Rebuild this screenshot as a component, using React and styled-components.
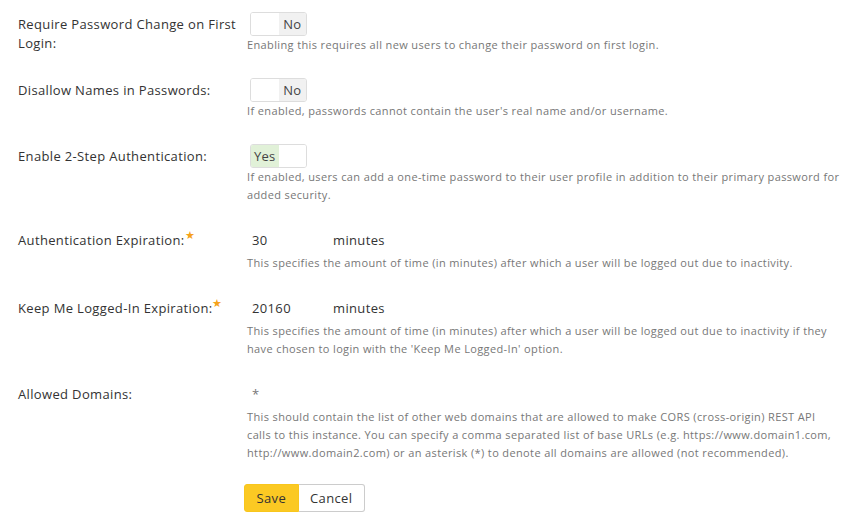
import React, { useState } from 'react';
import styled, { createGlobalStyle } from 'styled-components';

const GlobalStyle = createGlobalStyle`
  body {
    margin: 0;
    background: #fff;
    font-family: 'Open Sans', 'Liberation Sans', sans-serif;
    color: #333;
  }
`;

const Form = styled.div`
  display: flex;
  flex-direction: column;
  gap: 24px;
  padding: 12px 24px 0 18px;
`;

const Row = styled.div`
  display: grid;
  grid-template-columns: 229px 1fr;
  align-items: start;
`;

const Label = styled.label`
  font-size: 13px;
  line-height: 19px;
  letter-spacing: 0.35px;
  color: #333;
  padding-top: 3px;
  padding-right: 8px;
`;

const Star = styled.span`
  position: relative;
  top: -6px;
  color: #f5a21b;
  font-size: 11px;
  line-height: 0;
  letter-spacing: 0;
`;

const Field = styled.div`
  display: flex;
  flex-direction: column;
`;

const Help = styled.div`
  font-size: 11px;
  line-height: 18px;
  letter-spacing: 0.37px;
  color: #777;
`;

const Toggle = styled.button`
  display: flex;
  width: 57px;
  height: 24px;
  margin-left: 3px;
  padding: 0;
  border: 1px solid #ddd;
  border-radius: 3px;
  background: #fff;
  overflow: hidden;
  cursor: pointer;
  font-family: inherit;
`;

const Half = styled.span`
  flex: 1;
  display: flex;
  align-items: center;
  justify-content: center;
  font-size: 13px;
  letter-spacing: 0.3px;
  color: #444;
  background: ${(p) => p.$bg || '#fff'};
`;

const InputLine = styled.div`
  display: flex;
  align-items: center;
  height: 26px;
  padding-bottom: 2px;
  box-sizing: border-box;
`;

const Input = styled.input`
  width: 81px;
  border: none;
  outline: none;
  padding: 0 0 0 5px;
  font-family: inherit;
  font-size: 13px;
  letter-spacing: 0.35px;
  color: ${(p) => (p.$muted ? '#777' : '#333')};
  background: transparent;
`;

const Unit = styled.span`
  font-size: 13px;
  letter-spacing: 0.35px;
  color: #333;
`;

const Buttons = styled.div`
  display: flex;
  margin-left: 226px;
  margin-top: -2px;
`;

const Button = styled.button`
  height: 28px;
  padding: 0 11.5px;
  font-family: inherit;
  font-size: 13px;
  letter-spacing: 0.35px;
  color: #333;
  border: 1px solid ${(p) => (p.$primary ? '#f8c61d' : '#ccc')};
  border-left-width: ${(p) => (p.$primary ? '1px' : '0')};
  background: ${(p) => (p.$primary ? '#fbc923' : '#fff')};
  border-radius: ${(p) => (p.$primary ? '3px 0 0 3px' : '0 3px 3px 0')};
  cursor: pointer;
`;

const YesNo = ({ value, onChange }) => (
  <Toggle onClick={() => onChange(!value)}>
    {value ? (
      <>
        <Half $bg="#e1f1d8">Yes</Half>
        <Half />
      </>
    ) : (
      <>
        <Half />
        <Half $bg="#f1f1f1">No</Half>
      </>
    )}
  </Toggle>
);

const App = () => {
  const [requireChange, setRequireChange] = useState(false);
  const [disallowNames, setDisallowNames] = useState(false);
  const [twoStep, setTwoStep] = useState(true);
  const [authExp, setAuthExp] = useState('30');
  const [keepExp, setKeepExp] = useState('20160');
  const [domains, setDomains] = useState('*');

  return (
    <>
      <GlobalStyle />
      <Form>
        <Row>
          <Label>Require Password Change on First Login:</Label>
          <Field>
            <YesNo value={requireChange} onChange={setRequireChange} />
            <Help>Enabling this requires all new users to change their password on first login.</Help>
          </Field>
        </Row>
        <Row>
          <Label>Disallow Names in Passwords:</Label>
          <Field>
            <YesNo value={disallowNames} onChange={setDisallowNames} />
            <Help>If enabled, passwords cannot contain the user's real name and/or username.</Help>
          </Field>
        </Row>
        <Row>
          <Label>Enable 2-Step Authentication:</Label>
          <Field>
            <YesNo value={twoStep} onChange={setTwoStep} />
            <Help>
              If enabled, users can add a one-time password to their user profile in addition to their primary password for added security.
            </Help>
          </Field>
        </Row>
        <Row>
          <Label>Authentication Expiration:<Star>★</Star></Label>
          <Field>
            <InputLine>
              <Input value={authExp} onChange={(e) => setAuthExp(e.target.value)} />
              <Unit>minutes</Unit>
            </InputLine>
            <Help>This specifies the amount of time (in minutes) after which a user will be logged out due to inactivity.</Help>
          </Field>
        </Row>
        <Row>
          <Label>Keep Me Logged-In Expiration:<Star>★</Star></Label>
          <Field>
            <InputLine>
              <Input value={keepExp} onChange={(e) => setKeepExp(e.target.value)} />
              <Unit>minutes</Unit>
            </InputLine>
            <Help>
              This specifies the amount of time (in minutes) after which a user will be logged out due to inactivity if they have chosen to login with the 'Keep Me Logged-In' option.
            </Help>
          </Field>
        </Row>
        <Row>
          <Label>Allowed Domains:</Label>
          <Field>
            <InputLine>
              <Input $muted value={domains} onChange={(e) => setDomains(e.target.value)} />
            </InputLine>
            <Help>
              This should contain the list of other web domains that are allowed to make CORS (cross-origin) REST API calls to this instance. You can specify a comma separated list of base URLs (e.g. https://www.domain1.com, http://www.domain2.com) or an asterisk (*) to denote all domains are allowed (not recommended).
            </Help>
          </Field>
        </Row>
        <Buttons>
          <Button $primary>Save</Button>
          <Button>Cancel</Button>
        </Buttons>
      </Form>
    </>
  );
};

export default App;
